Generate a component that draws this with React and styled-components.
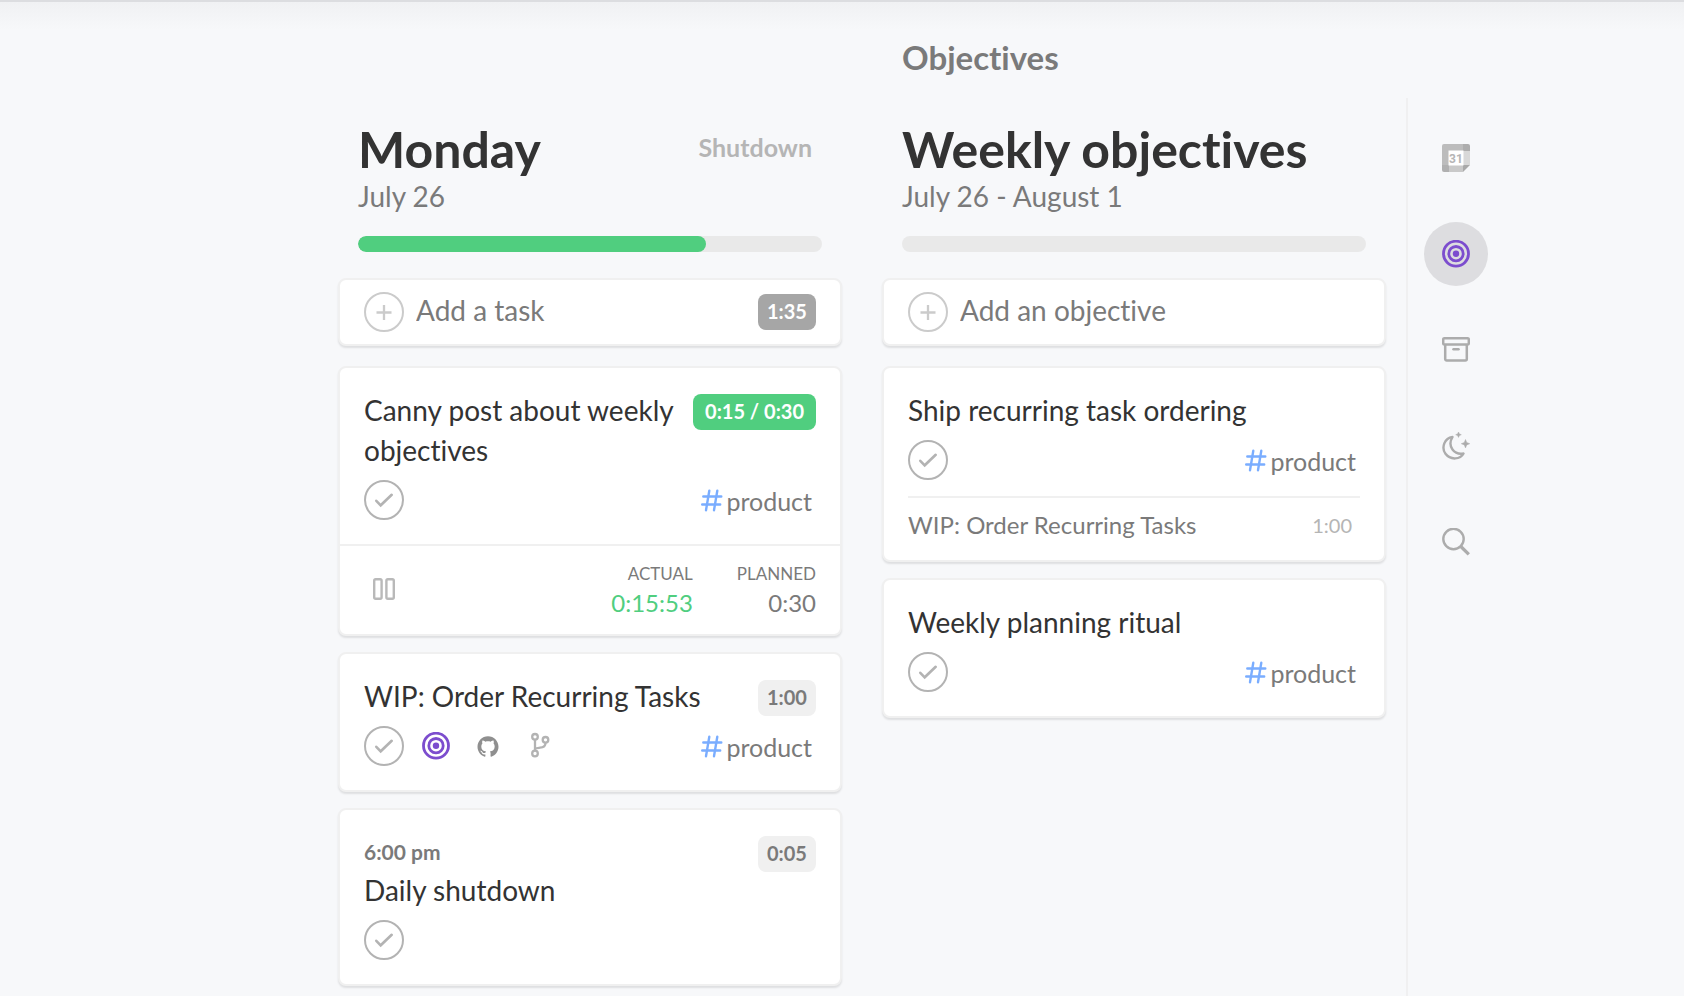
import React, { useState } from 'react';
import styled, { createGlobalStyle } from 'styled-components';
import { SiGithub } from 'react-icons/si';


const GlobalStyle = createGlobalStyle`
   * {
      box-sizing: border-box;
   }

   body {
      margin: 0;
      background: #f7f8fa;
      color: #333;
      font-family: Lato, "Open Sans", sans-serif;
      font-size: 28px;
      font-variant-ligatures: none;
   }

   button, input {
      font: inherit;
      font-variant-ligatures: none;
      color: inherit;
   }

   h1, h2, h3, p, ul, dl, dd {
      margin: 0;
      padding: 0;
   }
`;

const Page = styled.div`
   display: flex;
   min-height: 100vh;
   overflow: hidden;
   border-top: 2px solid #dcdde0;
   background: linear-gradient(#f0f1f3, #f7f8fa 28px);
`;

const Board = styled.main`
   flex: 1;
   min-width: 0;
   display: grid;
   grid-template-columns: repeat(2, minmax(0, 1fr));
   column-gap: 40px;
   align-content: start;
   padding: 0 20px 0 338px;

   @media (max-width: 1300px) {
      padding-left: 40px;
   }
`;

const Column = styled.section`
   min-width: 0;
`;

const PanelTitle = styled.p`
   height: 96px;
   padding: 31px 20px 0;
   color: #7a7a7a;
   font-size: 33px;
   font-weight: 700;
   line-height: 48px;
`;

const ColumnHeader = styled.header`
   padding: 20px 20px 0;
`;

const HeaderRow = styled.div`
   display: flex;
   justify-content: space-between;
   align-items: flex-start;
`;

const ColumnTitle = styled.h1`
   font-size: 50px;
   font-weight: 700;
   line-height: 62px;
`;

const ColumnDate = styled.p`
   color: #7a7a7a;
   line-height: 32px;
`;

const ShutdownButton = styled.button`
   border: 0;
   background: none;
   padding: 13px 10px 0;
   color: #b5b5b5;
   font-size: 25px;
   font-weight: 700;
   line-height: 32px;
   cursor: pointer;
`;

const Track = styled.div`
   height: 16px;
   margin: 24px 0 26px;
   border-radius: 8px;
   background: #e9e9e9;
   overflow: hidden;
`;

const Fill = styled.div`
   height: 100%;
   border-radius: 8px;
   background: #50ce7f;
`;

const Card = styled.article`
   margin-bottom: 16px;
   border: 2px solid #f0f0f0;
   border-radius: 8px;
   background: #fff;
   box-shadow: 0 2px 2px rgba(0, 0, 0, 0.1);
`;

const AddCard = styled(Card).attrs({ as: 'form' })`
   display: flex;
   align-items: center;
   height: 68px;
   margin-bottom: 20px;
   padding: 0 24px;
`;

const AddButton = styled.button`
   display: flex;
   flex: none;
   border: 0;
   background: none;
   padding: 0;
   color: #cbcbcb;
   cursor: pointer;
`;

const AddInput = styled.input`
   flex: 1;
   min-width: 0;
   height: 40px;
   border: 0;
   outline: 0;
   padding: 0 12px 4px;
   background: none;

   &::placeholder {
      color: #7a7a7a;
      opacity: 1;
   }
`;

const CardBody = styled.div`
   padding: 22px 24px ${(props) => (props.$tight ? '16px' : '24px')};
`;

const TitleRow = styled.div`
   display: flex;
   justify-content: space-between;
   align-items: flex-start;
   margin-bottom: 10px;
`;

const CardTitle = styled.h2`
   font-size: 28px;
   font-weight: 400;
   line-height: 40px;
`;

const StartTime = styled.p`
   padding-top: 2px;
   color: #7a7a7a;
   font-size: 21px;
   font-weight: 700;
   line-height: 36px;
`;

const badgeColors = {
   light: ['#f0f0f0', '#7a7a7a'],
   dark: ['#a6a6a6', '#fff'],
   green: ['#50ce7f', '#fff'],
};

const Badge = styled.span`
   flex: none;
   min-width: 58px;
   margin-top: ${(props) => (props.$inTitle ? '4px' : '0')};
   padding: ${(props) => (props.$tone === 'green' ? '0 12px 2px' : '0 8px 2px')};
   border-radius: 8px;
   background: ${(props) => badgeColors[props.$tone][0]};
   color: ${(props) => badgeColors[props.$tone][1]};
   font-size: 20px;
   font-weight: 700;
   line-height: 34px;
   text-align: center;
   white-space: nowrap;
`;

const MetaRow = styled.div`
   display: flex;
   align-items: center;
   height: 40px;
`;

const CheckLabel = styled.label`
   display: grid;
   width: 40px;
   height: 40px;
   color: ${(props) => (props.$checked ? '#50ce7f' : '#b3b3b3')};
   cursor: pointer;

   input, svg {
      grid-area: 1 / 1;
      margin: 0;
   }

   input {
      appearance: none;
   }
`;

const Integrations = styled.div`
   display: flex;
   align-items: center;
   gap: 24px;
   margin-left: 18px;

   svg {
      width: 28px;
   }
`;

const Channel = styled.a`
   display: flex;
   align-items: center;
   gap: 3px;
   margin-left: auto;
   padding: 2px 4px 0 0;
   color: #7a7a7a;
   font-size: 25px;
   line-height: 40px;
   text-decoration: none;
`;

const Timer = styled.div`
   display: flex;
   justify-content: space-between;
   align-items: center;
   height: 90px;
   padding: 0 24px 3px;
   border-top: 2px solid #f0f0f0;
`;

const PauseButton = styled.button`
   display: flex;
   justify-content: center;
   align-items: center;
   width: 40px;
   height: 40px;
   border: 0;
   padding: 0;
   background: none;
   cursor: pointer;
`;

const Times = styled.dl`
   display: flex;
   gap: 44px;
   text-align: right;
`;

const TimeLabel = styled.dt`
   color: #7a7a7a;
   font-size: 17px;
   line-height: 28px;
   text-transform: uppercase;
`;

const TimeValue = styled.dd`
   color: ${(props) => (props.$running ? '#50ce7f' : '#7a7a7a')};
   font-size: 24px;
   line-height: 30px;
`;

const LinkedTask = styled.div`
   display: flex;
   justify-content: space-between;
   align-items: center;
   margin: 0 24px;
   padding: 7px 8px 15px 0;
   border-top: 2px solid #f0f0f0;
   color: #7a7a7a;
   font-size: 24px;
   line-height: 40px;
`;

const LinkedTime = styled.span`
   color: #b5b5b5;
   font-size: 20px;
`;

const Sidebar = styled.nav`
   flex: none;
   display: flex;
   flex-direction: column;
   gap: 32px;
   width: 278px;
   margin-top: 96px;
   padding: 28px 16px 0;
   border-left: 2px solid #f0f0f1;

   @media (max-width: 1300px) {
      width: 98px;
   }
`;

const SidebarButton = styled.button`
   display: flex;
   justify-content: center;
   align-items: center;
   width: 64px;
   height: 64px;
   border: 0;
   border-radius: 50%;
   padding: 0;
   background: ${(props) => (props.$active ? '#dddde0' : 'transparent')};
   cursor: pointer;
`;


const TargetIcon = () => (
   <svg width="28" height="28" viewBox="0 0 28 28" fill="none" stroke="#7c4dce" strokeWidth="2.8">
      <circle cx="14" cy="13.700" r="12.5" />
      <circle cx="14" cy="13.700" r="7.2" />
      <circle cx="14" cy="13.700" r="3.2" fill="#7c4dce" stroke="none" />
   </svg>
);

const BranchIcon = () => (
   <svg width="28" height="28" viewBox="0 0 28 28" fill="none" stroke="#b3b3b3" strokeWidth="2.3">
      <circle cx="9" cy="4.8" r="2.8" />
      <circle cx="9" cy="21.500" r="2.8" />
      <circle cx="19.5" cy="7.800" r="2.8" />
      <path d="M9 7.500v11M9 16.800c1.200-.9 3-.9 5-1.100 3-.3 5.500-1.300 5.500-4.800" />
   </svg>
);

const HashIcon = () => (
   <svg width="22" height="24" viewBox="0 0 22 24" fill="none" stroke="#7aadff" strokeWidth="2.4" strokeLinecap="round">
      <path d="M8.300 1.800 5 21.200M16.300 1.800 13 21.200M2.300 7.500h18M1.200 15.500h18" />
   </svg>
);

const PauseIcon = () => (
   <svg width="22" height="22" viewBox="0 0 22 22" fill="none" stroke="#b9b9b9" strokeWidth="2.4">
      <rect x="1.2" y="1.2" width="7.4" height="19.6" rx="1.500" />
      <rect x="13.4" y="1.2" width="7.4" height="19.6" rx="1.500" />
   </svg>
);

const PlusCircle = () => (
   <svg width="40" height="40" viewBox="0 0 40 40" fill="none" stroke="currentColor" strokeWidth="2">
      <circle cx="20" cy="20" r="19" />
      <path d="M20 13v15M12.500 20.500h15" strokeWidth="2.300" />
   </svg>
);

const CheckCircle = () => (
   <svg width="40" height="40" viewBox="0 0 40 40" fill="none" stroke="currentColor" strokeWidth="2">
      <circle cx="20" cy="20" r="19" />
      <path d="m12.300 20.800 4.400 4.500 11-10.500" strokeWidth="2.600" strokeLinecap="round" />
   </svg>
);

const CalendarIcon = () => (
   <svg width="28" height="28" viewBox="0 0 28 28">
      <path d="M2 0h19v7H7v14H0V2a2 2 0 0 1 2-2z" fill="#bcbcbc" />
      <path d="M21 0h5a2 2 0 0 1 2 2v5h-7z" fill="#adadad" />
      <path d="M21 7h7v14h-7z" fill="#d8d8d8" />
      <path d="M7 21h14v7H7z" fill="#c9c9c9" />
      <path d="M0 21h7v7H2a2 2 0 0 1-2-2z" fill="#b0b0b0" />
      <path d="M21 21h7l-7 7z" fill="#a9a9a9" />
      <path d="M6.500 6.500h15v15h-15z" fill="#fff" />
      <text x="14" y="18.500" fill="#b5b5b5" fontFamily="Roboto, sans-serif" fontSize="12" fontWeight="700" textAnchor="middle">31</text>
   </svg>
);

const ArchiveIcon = () => (
   <svg width="28" height="28" viewBox="0 0 28 28" fill="none" stroke="#acacac" strokeWidth="2.500" strokeLinejoin="round">
      <rect x="1.200" y="2.300" width="25.600" height="6.200" rx="1" />
      <path d="M3.200 8.500v14.500a1.500 1.500 0 0 0 1.500 1.500h18.600a1.500 1.500 0 0 0 1.500-1.500V8.500" />
      <path d="M11.500 13.200h5" strokeLinecap="round" />
   </svg>
);

const MoonIcon = () => (
   <svg width="28" height="28" viewBox="0 0 28 28" fill="none" stroke="#acacac" strokeWidth="2.400" strokeLinejoin="round">
      <path d="M10.500 5C2.500 6 -1 15.500 3.500 21.800C8.500 28.500 18.500 27.500 21.500 21.500C12.500 23.200 4.800 14.500 10.500 5z" />
      <path d="m16.500 0 .9 1.900 1.900.8-1.900.8-.9 1.900-.9-1.900-1.900-.8 1.900-.8zM23.500 7.500l1.200 3 3 1.200-3 1.200-1.200 3-1.200-3-3-1.200 3-1.200z" fill="#acacac" stroke="#acacac" strokeWidth=".5" />
   </svg>
);

const SearchIcon = () => (
   <svg width="28" height="28" viewBox="0 0 28 28" fill="none" stroke="#acacac">
      <circle cx="11.500" cy="11" r="10.200" strokeWidth="2.400" />
      <path d="m18.800 18.500 8 7.800" strokeWidth="3.200" />
   </svg>
);


function Progress({ label, value }) {
   return (
      <Track role="progressbar" aria-label={ label } aria-valuenow={ value }>
         { value > 0 && <Fill style={{ width: `${value}%` }} /> }
      </Track>
   )
}

function AddRow({ placeholder, total }) {
   return (
      <AddCard onSubmit={ (e) => e.preventDefault() }>
         <AddButton type="submit" aria-label={ placeholder }><PlusCircle /></AddButton>
         <AddInput type="text" aria-label={ placeholder } placeholder={ placeholder } />
         { total && <Badge $tone="dark">{ total }</Badge> }
      </AddCard>
   )
}

function Check({ title }) {
   const [checked, setChecked] = useState(false);

   return (
      <CheckLabel $checked={ checked }>
         <input type="checkbox" aria-label={ title } checked={ checked } onChange={ () => setChecked(!checked) } />
         <CheckCircle />
      </CheckLabel>
   )
}

function Task({ title, time, tone = 'light', start, channel, integrations, tight, children }) {
   return (
      <Card>
         <CardBody $tight={ tight }>
            <TitleRow>
               <div>
                  { start && <StartTime>{ start }</StartTime> }
                  <CardTitle>{ title }</CardTitle>
               </div>
               { time && <Badge $tone={ tone } $inTitle>{ time }</Badge> }
            </TitleRow>
            <MetaRow>
               <Check title={ title } />
               { integrations && (
                  <Integrations>
                     <TargetIcon />
                     <SiGithub size={ 21 } color="#8f8f8f" />
                     <BranchIcon />
                  </Integrations>
               ) }
               { channel && <Channel href="#product"><HashIcon />{ channel }</Channel> }
            </MetaRow>
         </CardBody>
         { children }
      </Card>
   )
}

const sidebarItems = [
   { name: 'Calendar', icon: CalendarIcon },
   { name: 'Objectives', icon: TargetIcon },
   { name: 'Archive', icon: ArchiveIcon },
   { name: 'Shutdown', icon: MoonIcon },
   { name: 'Search', icon: SearchIcon },
];

function App() {
   const [panel, setPanel] = useState('Objectives');

   return (
      <>
         <GlobalStyle />
         <Page>
            <Board>
               <Column>
                  <PanelTitle />
                  <ColumnHeader>
                     <HeaderRow>
                        <ColumnTitle>Monday</ColumnTitle>
                        <ShutdownButton type="button">Shutdown</ShutdownButton>
                     </HeaderRow>
                     <ColumnDate>July 26</ColumnDate>
                     <Progress label="Monday" value={ 75 } />
                  </ColumnHeader>
                  <AddRow placeholder="Add a task" total="1:35" />
                  <Task title="Canny post about weekly objectives" time="0:15 / 0:30" tone="green" channel="product">
                     <Timer>
                        <PauseButton type="button" aria-label="Pause"><PauseIcon /></PauseButton>
                        <Times>
                           <div>
                              <TimeLabel>Actual</TimeLabel>
                              <TimeValue $running>0:15:53</TimeValue>
                           </div>
                           <div>
                              <TimeLabel>Planned</TimeLabel>
                              <TimeValue>0:30</TimeValue>
                           </div>
                        </Times>
                     </Timer>
                  </Task>
                  <Task title="WIP: Order Recurring Tasks" time="1:00" channel="product" integrations />
                  <Task title="Daily shutdown" time="0:05" start="6:00 pm" />
               </Column>

               <Column>
                  <PanelTitle>Objectives</PanelTitle>
                  <ColumnHeader>
                     <ColumnTitle>Weekly objectives</ColumnTitle>
                     <ColumnDate>July 26 - August 1</ColumnDate>
                     <Progress label="Weekly objectives" value={ 0 } />
                  </ColumnHeader>
                  <AddRow placeholder="Add an objective" />
                  <Task title="Ship recurring task ordering" channel="product" tight>
                     <LinkedTask>
                        WIP: Order Recurring Tasks
                        <LinkedTime>1:00</LinkedTime>
                     </LinkedTask>
                  </Task>
                  <Task title="Weekly planning ritual" channel="product" />
               </Column>
            </Board>

            <Sidebar>
               { sidebarItems.map(({ name, icon: Icon }) => (
                  <SidebarButton key={ name } type="button" aria-label={ name } $active={ panel === name } onClick={ () => setPanel(name) }>
                     <Icon />
                  </SidebarButton>
               )) }
            </Sidebar>
         </Page>
      </>
   )
}

export default App
